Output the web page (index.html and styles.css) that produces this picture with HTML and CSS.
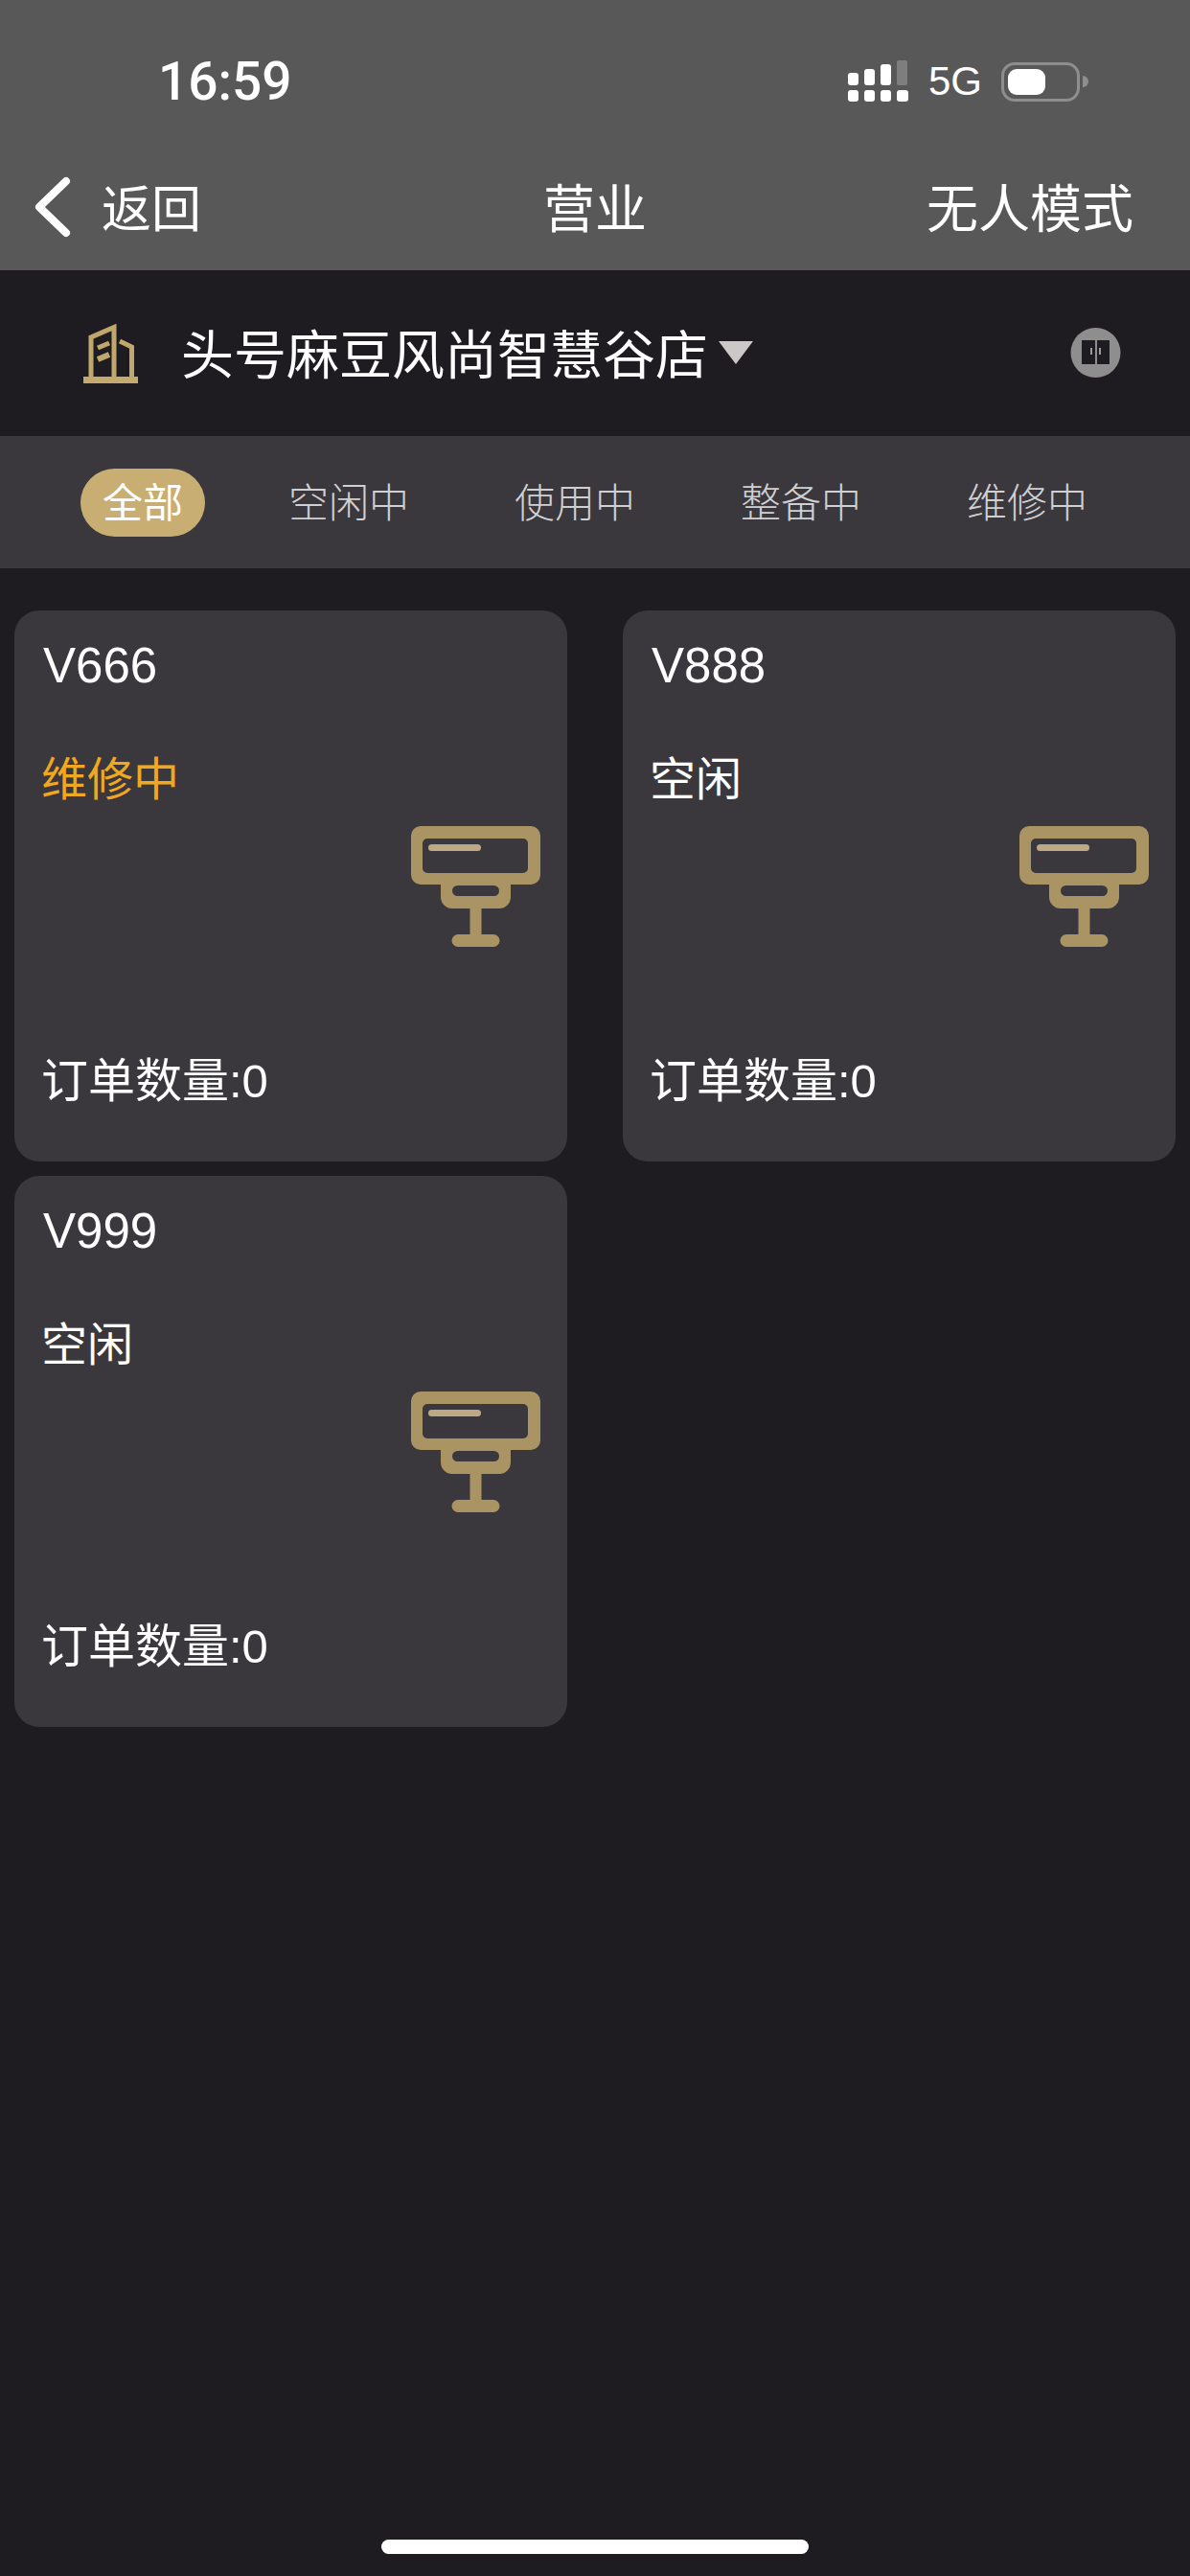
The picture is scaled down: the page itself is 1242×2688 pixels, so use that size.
FILE: index.html
```html
<!DOCTYPE html>
<html lang="zh-CN">
<head>
  <meta charset="UTF-8" />
  <title>营业</title>
  <link rel="stylesheet" href="styles.css">
</head>
<body>
  <svg class="sprite" width="0" height="0">
    <symbol id="roomIcon" viewBox="0 0 135 126">
      <path fill-rule="evenodd" fill="#ab9464" d="M10 0H125A10 10 0 0 1 135 10V51A10 10 0 0 1 125 61H104V74A12 12 0 0 1 92 86H73.500V113H86A6.500 6.500 0 0 1 86 126H49A6.500 6.500 0 0 1 49 113H61.500V86H43A12 12 0 0 1 31 74V61H10A10 10 0 0 1 0 51V10A10 10 0 0 1 10 0ZM17 13A5 5 0 0 0 12 18V44A5 5 0 0 0 17 49H117A5 5 0 0 0 122 44V18A5 5 0 0 0 117 13ZM48.500 62A5.500 5.500 0 0 0 48.500 73H86.500A5.500 5.500 0 0 0 86.500 62Z" />
      <rect x="18" y="19" width="55" height="7" rx="3.500" fill="#bda985" />
    </symbol>
  </svg>

  <div class="page">
    <header class="top">
      <div class="status-bar">
        <span class="time">16:59</span>
        <div class="status-right">
          <svg class="signal" width="63" height="43" viewBox="0 0 63 43">
            <g fill="#fff">
              <rect x="0" y="31" width="11" height="12" rx="3" />
              <rect x="17" y="31" width="11" height="12" rx="3" />
              <rect x="34" y="31" width="11" height="12" rx="3" />
              <rect x="51" y="31" width="12" height="12" rx="3" />
              <rect x="0" y="13" width="11" height="13" rx="3" />
              <rect x="17" y="9" width="11" height="17" rx="3" />
              <rect x="34" y="4" width="11" height="22" rx="3" />
            </g>
            <rect x="51" y="0" width="11" height="26" rx="2" fill="#7e7e7e" />
          </svg>
          <span class="net">5G</span>
          <div class="battery">
            <div class="battery-fill"></div>
          </div>
          <div class="battery-cap"></div>
        </div>
      </div>
      <nav class="nav">
        <div class="nav-back">
          <svg width="38" height="64" viewBox="0 0 38 64">
            <path d="M33 5L5 32L33 59" fill="none" stroke="#fff" stroke-width="8" stroke-linecap="round" stroke-linejoin="round" />
          </svg>
          <span class="nav-text">返回</span>
        </div>
        <div class="nav-title nav-text">营业</div>
        <div class="nav-action nav-text">无人模式</div>
      </nav>
    </header>

    <section class="store-bar">
      <svg class="store-icon" width="57" height="62" viewBox="0 0 57 62">
        <rect x="0" y="55" width="57" height="7" fill="#c4aa6e" />
        <g fill="none" stroke="#c0a76c" stroke-width="5">
          <path d="M8 56V14L32 3.500V56" />
          <path d="M38 18L50.500 24V56" />
          <path d="M15 25L27 20" />
          <path d="M15 37L27 32" stroke-width="6" />
        </g>
      </svg>
      <span class="store-name">头号麻豆风尚智慧谷店</span>
      <span class="store-arrow"></span>
      <svg class="door-icon" width="53" height="52" viewBox="0 0 53 52">
        <circle cx="26.500" cy="26" r="26" fill="#8e8e8e" />
        <rect x="12" y="13" width="14" height="25" fill="#1e1c21" />
        <rect x="28" y="13" width="13" height="25" fill="#1e1c21" />
        <rect x="21" y="21" width="2" height="7" fill="#9a9a9a" />
        <rect x="30" y="21" width="2" height="7" fill="#9a9a9a" />
      </svg>
    </section>

    <div class="tabs">
      <span class="tab active">全部</span>
      <span class="tab">空闲中</span>
      <span class="tab">使用中</span>
      <span class="tab">整备中</span>
      <span class="tab">维修中</span>
    </div>

    <main class="room-list">
      <div class="room-card">
        <div class="room-name">V666</div>
        <div class="room-status repair">维修中</div>
        <svg class="room-icon"><use href="#roomIcon" /></svg>
        <div class="room-orders">订单数量:0</div>
      </div>
      <div class="room-card">
        <div class="room-name">V888</div>
        <div class="room-status">空闲</div>
        <svg class="room-icon"><use href="#roomIcon" /></svg>
        <div class="room-orders">订单数量:0</div>
      </div>
      <div class="room-card">
        <div class="room-name">V999</div>
        <div class="room-status">空闲</div>
        <svg class="room-icon"><use href="#roomIcon" /></svg>
        <div class="room-orders">订单数量:0</div>
      </div>
    </main>

    <div class="home-bar"></div>
  </div>
</body>
</html>
```

FILE: styles.css
```css
body {
  margin: 0;
  background: #1e1c21;
  color: #fff;
  font-family: 'Liberation Sans', 'Noto Sans CJK SC', sans-serif;
}
.sprite {
  display: block;
  position: absolute;
}
.page {
  width: 1242px;
  height: 2688px;
  display: flex;
  flex-direction: column;
  overflow: hidden;
}
.top {
  height: 282px;
  background: #585858;
}
.status-bar {
  height: 170px;
  display: flex;
  align-items: center;
  justify-content: space-between;
  padding: 0 106px 0 165px;
}
.time {
  font-family: Roboto, sans-serif;
  font-weight: 500;
  font-size: 55px;
}
.status-right {
  display: flex;
  align-items: center;
}
.signal {
  display: block;
  margin: 0 21px 2px 0;
}
.net {
  font-size: 42px;
  margin-right: 20px;
}
.battery {
  width: 82px;
  height: 41px;
  box-sizing: border-box;
  border: 3px solid #8e8e8e;
  border-radius: 14px;
  padding: 4px;
}
.battery-fill {
  width: 39px;
  height: 100%;
  background: #fff;
  border-radius: 9px;
}
.battery-cap {
  width: 6px;
  height: 12px;
  margin-left: 3px;
  background: #8e8e8e;
  border-radius: 0 6px 6px 0;
}
.nav {
  display: grid;
  grid-template-columns: 1fr auto 1fr;
  align-items: center;
  height: 92px;
  padding: 0 36px 20px;
  font-size: 54px;
  line-height: 64px;
}
.nav-text {
  padding-top: 5px;
}
.nav-back {
  display: flex;
  align-items: center;
  gap: 32px;
  font-size: 52px;
}
.nav-action {
  margin-right: 23px;
  text-align: right;
}
.store-bar {
  height: 173px;
  display: flex;
  align-items: center;
  padding: 0 73px 0 87px;
}
.store-icon {
  margin-right: 45px;
}
.store-name {
  padding-top: 5px;
  font-size: 55px;
  line-height: 64px;
}
.store-arrow {
  width: 0;
  height: 0;
  margin: 0 0 2px 11px;
  border-left: 18px solid transparent;
  border-right: 18px solid transparent;
  border-top: 24px solid #ccc8c8;
}
.door-icon {
  margin: 0 -1px 2px auto;
}
.tabs {
  height: 138px;
  background: #3a383d;
  display: flex;
  align-items: center;
  justify-content: space-between;
  padding: 0 84px;
  font-size: 42px;
  color: #d0cfd1;
  font-weight: 300;
}
.tab {
  padding: 2px 23px 0;
  line-height: 69px;
  border-radius: 36px;
}
.tab.active {
  background: #c8ae72;
  color: #fff;
  font-weight: 400;
}
.room-list {
  display: grid;
  grid-template-columns: 1fr 1fr;
  column-gap: 58px;
  row-gap: 15px;
  padding: 44px 15px 0;
}
.room-card {
  height: 575px;
  box-sizing: border-box;
  background: #3a383d;
  border-radius: 26px;
  padding: 28px 28px 0 30px;
  display: flex;
  flex-direction: column;
}
.room-name {
  font-size: 51px;
  line-height: 60px;
}
.room-status {
  margin: 59px 0 0 -2px;
  font-size: 48px;
  line-height: 60px;
}
.room-status.repair {
  color: #f0a820;
}
.room-icon {
  width: 135px;
  height: 126px;
  margin-top: 18px;
  align-self: flex-end;
}
.room-orders {
  margin: 110px 0 0 -2px;
  font-size: 49px;
  line-height: 60px;
}
.home-bar {
  width: 446px;
  height: 15px;
  margin: auto auto 23px;
  background: #fff;
  border-radius: 8px;
}
```
